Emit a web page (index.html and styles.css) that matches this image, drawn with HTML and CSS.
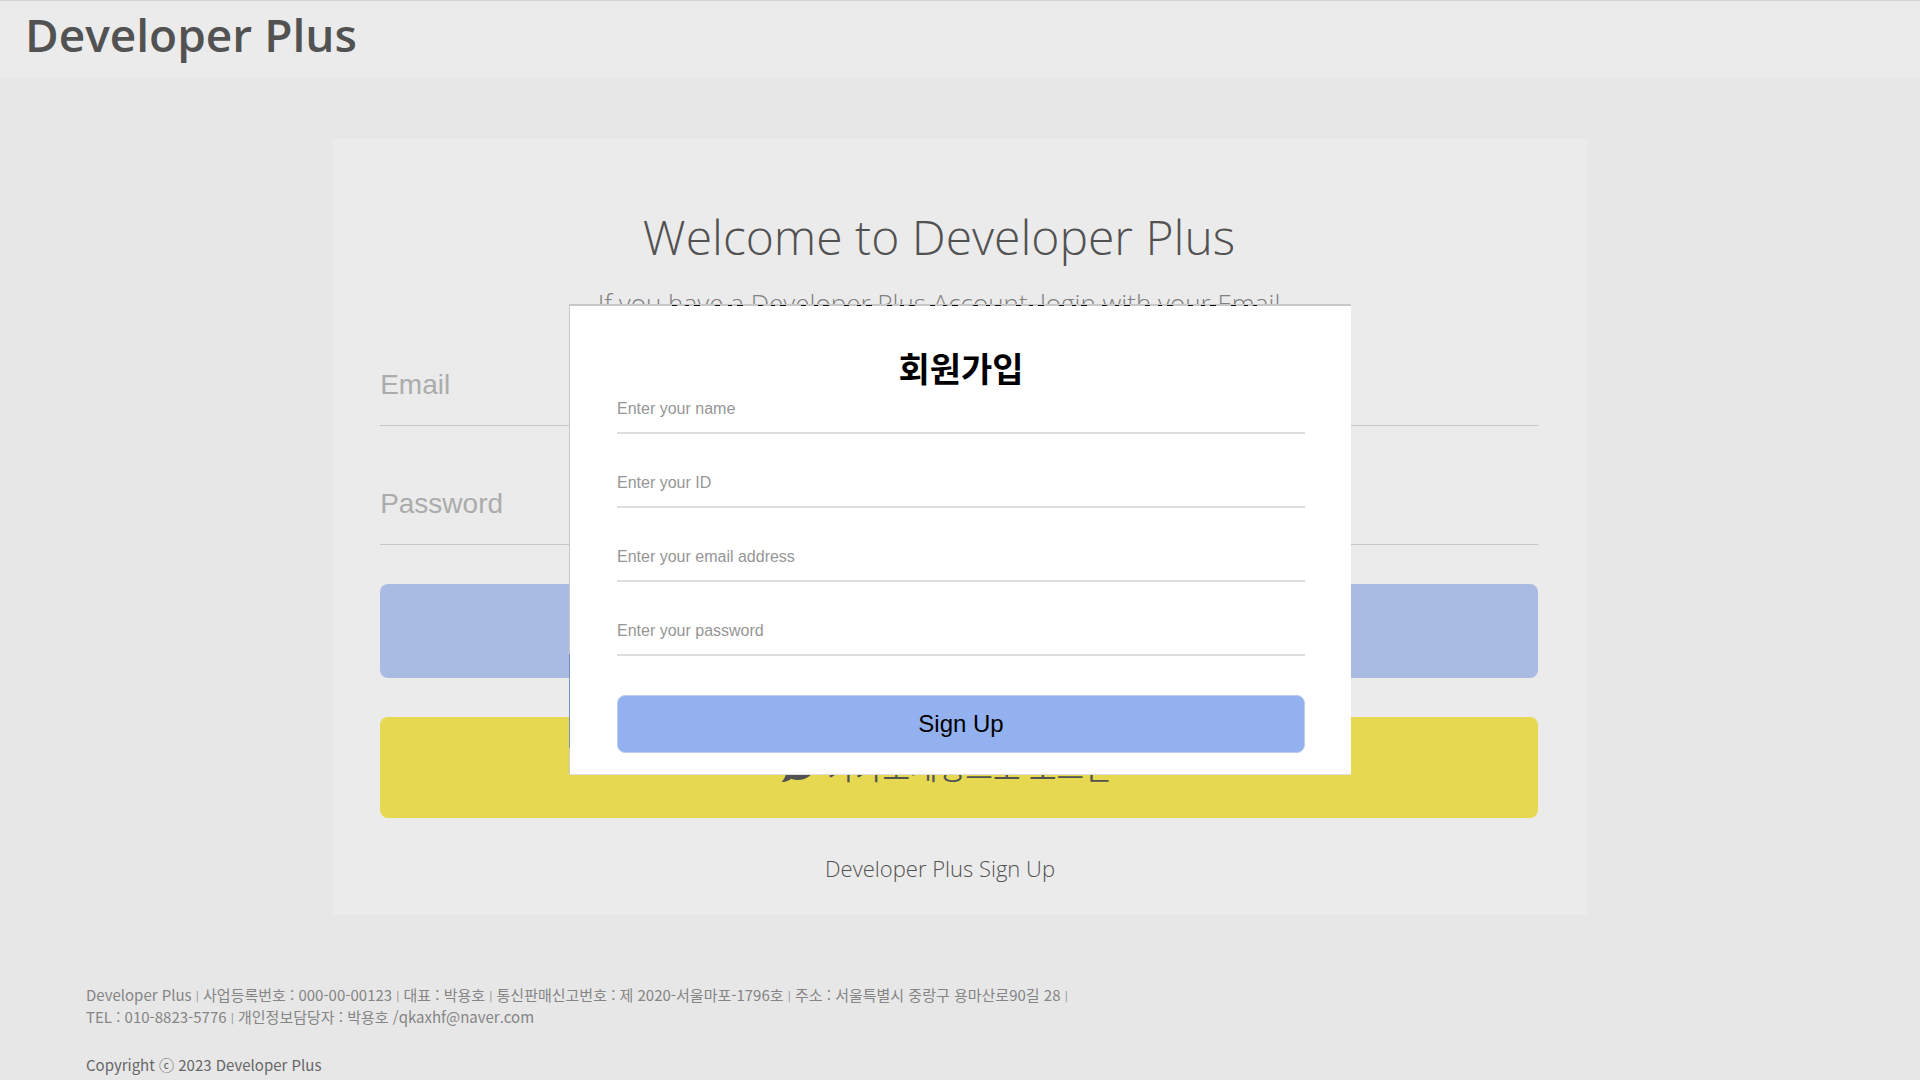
FILE: index.html
```html
<!DOCTYPE html>
<html lang="ko">
<head>
<meta charset="utf-8">
<meta name="viewport" content="width=device-width, initial-scale=1">
<title>Developer Plus</title>
<link rel="stylesheet" href="styles.css">
</head>
<body>
<header class="site-header"><h1 class="brand">Developer Plus</h1></header>
<main class="login">
  <div class="login-heading">
    <h2 class="login-title">Welcome to Developer Plus</h2>
    <p class="login-subtitle">If you have a Developer Plus Account, login with your Email</p>
  </div>
  <form class="login-form">
    <input class="login-input" type="email" placeholder="Email" aria-label="Email">
    <input class="login-input" type="password" placeholder="Password" aria-label="Password">
    <button class="login-button" type="button" aria-label="Login"></button>
    <button class="kakao-button" type="button">
      <svg class="kakao-icon" viewBox="0 0 512 512" aria-hidden="true"><path d="M256 32C114.600 32 0 125.100 0 240c0 49.600 21.400 95 57 130.700C44.500 421.100 2.700 466 2.200 466.500c-2.200 2.300-2.800 5.700-1.500 8.700S4.800 480 8 480c66.300 0 116-31.800 140.600-51.400 32.700 12.300 69 19.400 107.400 19.400 141.400 0 256-93.100 256-208S397.400 32 256 32z"/></svg>
      <span class="kakao-label">카카오계정으로 로그인</span>
    </button>
    <a class="signup-link" href="#signup">Developer Plus Sign Up</a>
  </form>
</main>
<footer class="site-footer">
  <p class="company">Developer Plus <span class="sep">ㅣ</span> 사업등록번호 : 000-00-00123 <span class="sep">ㅣ</span> 대표 : 박용호 <span class="sep">ㅣ</span> 통신판매신고번호 : 제 2020-서울마포-1796호 <span class="sep">ㅣ</span> 주소 : 서울특별시 중랑구 용마산로90길 28 <span class="sep">ㅣ</span><br>TEL : 010-8823-5776 <span class="sep">ㅣ</span> 개인정보담당자 : 박용호 /qkaxhf@naver.com</p>
  <p class="copyright">Copyright ⓒ 2023 Developer Plus</p>
</footer>
<div class="overlay">
  <section class="modal" id="signup" role="dialog" aria-labelledby="signup-title">
    <h2 class="modal-title" id="signup-title">회원가입</h2>
    <form class="modal-form">
      <input class="modal-input" type="text" placeholder="Enter your name" aria-label="Name">
      <input class="modal-input" type="text" placeholder="Enter your ID" aria-label="ID">
      <input class="modal-input" type="email" placeholder="Enter your email address" aria-label="Email address">
      <input class="modal-input" type="password" placeholder="Enter your password" aria-label="New password">
      <button class="modal-button" type="submit">Sign Up</button>
    </form>
  </section>
</div>
</body>
</html>
```
FILE: styles.css
```css
* { box-sizing: border-box; }
body {
  margin: 0;
  min-height: 100vh;
  background: #e7e7e7;
  color: #525252;
  font-family: "Open Sans", "Noto Sans CJK KR", sans-serif;
}
h1, h2, p { margin: 0; }
input, button { font-family: "Liberation Sans", "Noto Sans CJK KR", sans-serif; }
.site-header {
  height: 79px;
  padding: 0 25px;
  border-top: 1px solid #d2d2d2;
  background: #ebebeb;
}
.brand { font-size: 46px; font-weight: 600; line-height: 66px; }
.login {
  width: 65.3%;
  margin: 60px auto 0;
  padding: 64px 49px 0 47px;
  height: 776px;
  background: #ebebeb;
}
.login-heading { text-align: center; padding-right: 40px; }
.login-title { font-size: 48px; font-weight: 300; line-height: 68px; }
.login-subtitle { color: #808080; font-size: 26px; font-weight: 300; line-height: 36px; margin-top: 14px; }
.login-form { display: flex; flex-direction: column; }
.login-input {
  height: 84px;
  margin-bottom: 35px;
  padding: 2px 0 0;
  border: 0;
  border-bottom: 1px solid #c6c6c6;
  background: transparent;
  font-size: 28px;
}
.login-input:first-child { margin-top: 21px; }
.login-input::placeholder { color: #acacac; }
.login-button, .kakao-button { border: 0; border-radius: 8px; color: #525252; }
.login-button { height: 94px; margin-top: 4px; background: #aabbe3; }
.kakao-button {
  display: flex;
  align-items: center;
  justify-content: center;
  gap: 13px;
  height: 101px;
  margin-top: 39px;
  padding: 0 24px 0 0;
  background: #e6d951;
  font-family: "Noto Sans CJK KR", sans-serif;
  font-size: 30px;
  font-weight: 350;
}
.kakao-icon { width: 32px; height: 32px; fill: #525252; }
.kakao-label { padding-bottom: 4px; }
.signup-link {
  align-self: center;
  margin: 34px 0 0;
  padding-right: 38px;
  color: #525252;
  font-size: 22px;
  font-weight: 350;
  line-height: 32px;
  text-decoration: none;
}
.site-footer {
  padding: 69px 86px 0;
  font-family: "Noto Sans CJK KR", sans-serif;
  font-size: 15px;
  line-height: 22px;
}
.company { color: #858585; }
.sep {
  display: inline-flex;
  justify-content: center;
  width: 3px;
  font-size: 13px;
  font-weight: 300;
  line-height: 20px;
}
.copyright { margin-top: 26px; color: #666; }
.overlay {
  position: absolute;
  inset: 0;
  display: flex;
  align-items: center;
  justify-content: center;
  padding-bottom: 1px;
}
.modal {
  position: relative;
  width: 782px;
  height: 471px;
  padding: 39px 46px 0 47px;
  border: 1px solid #ddd;
  border-top: 2px solid #c8c8c8;
  border-left-color: #c8c8c8;
  border-right: 0;
  background: #fff;
  color: #000;
}
/* Broken dark line along the top edge */
.modal::after {
  content: "";
  position: absolute;
  top: -1px;
  left: 13%;
  right: 12%;
  height: 1px;
  background: repeating-linear-gradient(90deg, #111 0 5px, transparent 5px 13px, #111 13px 17px, transparent 17px 22px, #111 22px 28px, transparent 28px 43px);
}
/* Blue accent on the left edge */
.modal::before {
  content: "";
  position: absolute;
  left: -1px;
  top: 348px;
  width: 1px;
  height: 94px;
  background: #7690c8;
}
.modal-title {
  font-family: "Noto Sans CJK KR", sans-serif;
  font-size: 34px;
  line-height: 46px;
  text-align: center;
}
.modal-form { display: flex; flex-direction: column; }
.modal-input {
  height: 43px;
  margin-bottom: 31px;
  padding: 0 0 5px;
  border: 0;
  border-bottom: 2px solid #dedede;
  font-size: 16px;
}
.modal-input::placeholder { color: #969696; }
.modal-button {
  height: 58px;
  margin-top: 8px;
  border: 1px solid #bccdf2;
  border-radius: 8px;
  background: #94b1ef;
  color: #000;
  font-size: 24px;
}
```
